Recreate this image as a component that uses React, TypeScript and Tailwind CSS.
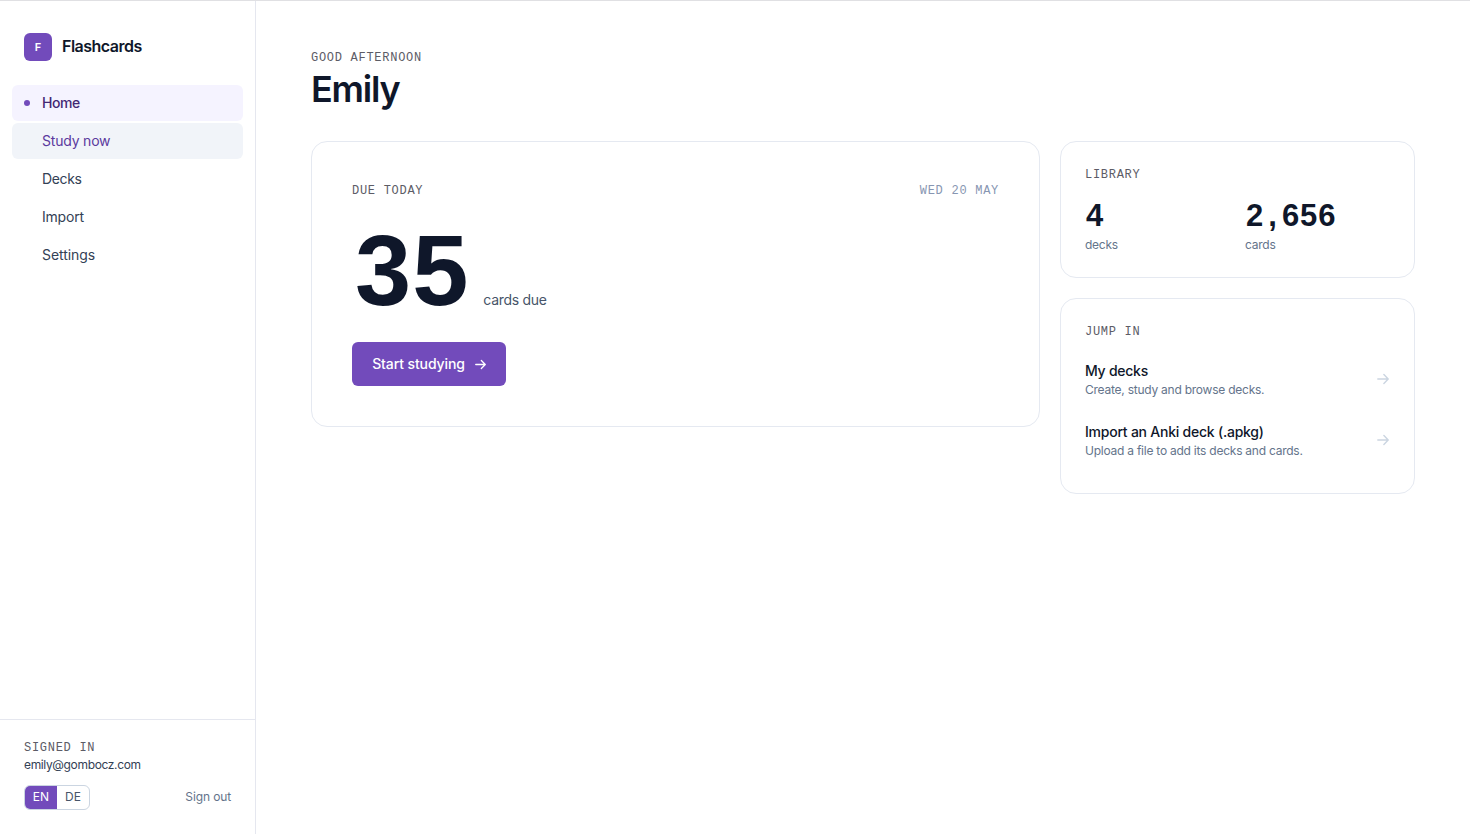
import type { ReactNode } from "react";

const sans = "font-['Inter',sans-serif]";
const digits = "font-['Liberation_Sans',Arial,sans-serif] font-bold";

function Eyebrow({ children, className = "text-[#5c5c66]" }: { children: ReactNode; className?: string }) {
  return (
    <div className={`font-['Liberation_Mono',monospace] text-[12px] leading-4 tracking-[0.72px] uppercase ${className}`}>
      {children}
    </div>
  );
}

function Arrow({ className }: { className: string }) {
  return (
    <svg viewBox="0 0 12 12" fill="none" stroke="currentColor" strokeWidth="1.4" strokeLinecap="round" strokeLinejoin="round" className={className}>
      <path d="M0.8 6H11M6.9 1.6L11.2 6L6.9 10.4" />
    </svg>
  );
}

const navItems = [
  { label: "Home", style: "bg-[#f5f3ff] text-[#432874] font-medium tracking-[-0.45px]", dot: true },
  { label: "Study now", style: "bg-[#f1f4f9] text-[#5b3a9e] tracking-[-0.2px]", dot: false },
  { label: "Decks", style: "text-[#334155] tracking-[-0.35px]", dot: false },
  { label: "Import", style: "text-[#334155] tracking-[-0.2px]", dot: false },
  { label: "Settings", style: "text-[#334155] tracking-[-0.08px]", dot: false },
];

function Sidebar() {
  return (
    <aside className="flex w-64 shrink-0 flex-col border-r border-[#e5e7ef]">
      <div className="flex items-center gap-2.5 px-6 pt-8">
        <div className="flex size-7 items-center justify-center rounded-md bg-[#724bbb] text-[11px] font-semibold text-white">F</div>
        <span className="pb-0.5 text-[16px] font-semibold tracking-[-0.5px] text-[#0f172a]">Flashcards</span>
      </div>
      <nav className="mt-6 flex flex-col gap-0.5 px-3">
        {navItems.map((item) => (
          <a key={item.label} className={`flex h-9 items-center gap-3 rounded-md px-3 text-sm ${item.style}`}>
            <span className={item.dot ? "size-1.5 rounded-full bg-[#724bbb]" : "size-1.5"} />
            {item.label}
          </a>
        ))}
      </nav>
      <div className="mt-auto h-[115px] border-t border-[#e5e7ef] px-6 pt-5">
        <Eyebrow>Signed in</Eyebrow>
        <div className="mt-px text-xs leading-4 tracking-[-0.35px] text-[#334155]">emily@gombocz.com</div>
        <div className="mt-3 flex items-center justify-between text-xs">
          <div className="flex h-[25px] w-[66px] overflow-hidden rounded-md border border-[#cbd5e1]">
            <span className="flex w-8 items-center justify-center bg-[#724bbb] pb-px text-white">EN</span>
            <span className="flex flex-1 items-center justify-center pb-px text-[#475569]">DE</span>
          </div>
          <span className="pb-0.5 tracking-[-0.12px] text-[#64748b]">Sign out</span>
        </div>
      </div>
    </aside>
  );
}

function DueCard() {
  return (
    <section className="h-[286px] rounded-[16px] border border-[#e5e9f1] px-10 pt-[41px]">
      <div className="flex justify-between">
        <Eyebrow>Due today</Eyebrow>
        <Eyebrow className="text-[#8796b2]">Wed 20 May</Eyebrow>
      </div>
      <div className="mt-5 flex h-[100px] items-baseline gap-[14px]">
        <span className={`pl-[3px] text-[101px] leading-[102px] tracking-[1px] text-[#0f172a] ${digits}`}>35</span>
        <span className="text-sm tracking-[-0.3px] text-[#475569]">cards due</span>
      </div>
      <button className="mt-[23px] flex h-11 w-[154px] items-center justify-center gap-2.5 rounded-md bg-[#724bbb] text-sm font-medium tracking-[-0.1px] text-white">
        Start studying
        <Arrow className="size-[11px]" />
      </button>
    </section>
  );
}

function Stat({ children, label }: { children: ReactNode; label: string }) {
  return (
    <div>
      <div className={`flex pl-px text-[31px] leading-9 tracking-[0.8px] text-[#0f172a] ${digits}`}>{children}</div>
      <div className="mt-[3px] text-xs leading-4 tracking-[-0.25px] text-[#64748b]">{label}</div>
    </div>
  );
}

function JumpRow({ title, text, titleStyle }: { title: string; text: string; titleStyle: string }) {
  return (
    <div className="flex items-center justify-between">
      <div>
        <div className={`text-sm leading-5 font-medium text-[#0f172a] ${titleStyle}`}>{title}</div>
        <div className="mt-px text-xs leading-4 tracking-[-0.24px] text-[#64748b]">{text}</div>
      </div>
      <Arrow className="mr-px mb-0.5 size-3 text-[#cbd5e1]" />
    </div>
  );
}

export default function App() {
  return (
    <div className={`flex h-[834px] overflow-hidden border-t border-[#e0e0e3] bg-white ${sans}`}>
      <Sidebar />
      <main className="flex-1 px-[55px] pt-[49px]">
        <Eyebrow>Good afternoon</Eyebrow>
        <h1 className="mt-[3px] text-[36px] leading-10 font-semibold tracking-[-1.2px] text-[#0f172a]">Emily</h1>
        <div className="mt-8 grid grid-cols-[729px_355px] items-start gap-5">
          <DueCard />
          <div className="flex flex-col gap-5">
            <section className="h-[137px] rounded-[16px] border border-[#e5e9f1] px-6 pt-[25px]">
              <Eyebrow>Library</Eyebrow>
              <div className="mt-[15px] grid grid-cols-[144px_144px] gap-4">
                <Stat label="decks">4</Stat>
                <Stat label="cards">
                  <span>2</span>
                  <span className="w-[18px] text-center">,</span>
                  <span>656</span>
                </Stat>
              </div>
            </section>
            <section className="h-[196px] rounded-[16px] border border-[#e5e9f1] px-6 pt-[25px]">
              <Eyebrow>Jump in</Eyebrow>
              <div className="mt-[21px] flex flex-col gap-6">
                <JumpRow title="My decks" text="Create, study and browse decks." titleStyle="tracking-[-0.25px]" />
                <JumpRow title="Import an Anki deck (.apkg)" text="Upload a file to add its decks and cards." titleStyle="tracking-[-0.23px]" />
              </div>
            </section>
          </div>
        </div>
      </main>
    </div>
  );
}
